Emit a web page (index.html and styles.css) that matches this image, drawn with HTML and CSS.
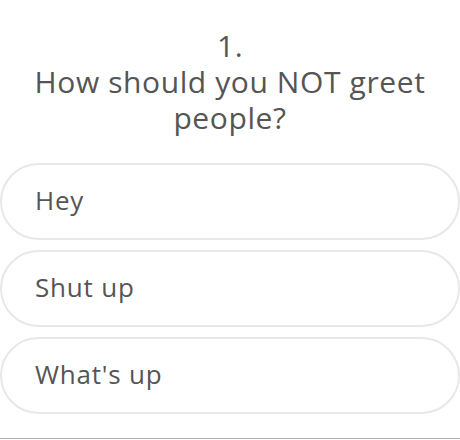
FILE: index.html
```html
<!DOCTYPE html>
<html>
<head>
<meta charset="utf-8">
<link rel="stylesheet" href="styles.css">
</head>
<body>
<div class="quiz">
  <div class="question">
    <div class="num">1.</div>
    <div class="text">How should you NOT greet people?</div>
  </div>
  <div class="answers">
    <div class="answer">Hey</div>
    <div class="answer">Shut up</div>
    <div class="answer">What's up</div>
  </div>
</div>
</body>
</html>
```

FILE: styles.css
```css
html, body {
  margin: 0;
  padding: 0;
  background: #fff;
}
body {
  font-family: "Open Sans", sans-serif;
  color: #555;
  width: 460px;
  height: 440px;
  overflow: hidden;
}
.quiz {
  height: 439px;
  border-bottom: 1px solid #b0b0b0;
  box-sizing: border-box;
}
.question {
  text-align: center;
  font-size: 30px;
  line-height: 36px;
  letter-spacing: 0.6px;
  padding: 28px 20px 0;
}
.answers {
  display: flex;
  flex-direction: column;
  gap: 10px;
  margin-top: 27px;
}
.answer {
  height: 77px;
  box-sizing: border-box;
  border: 2px solid #e8e8e8;
  border-radius: 39px;
  display: flex;
  align-items: center;
  padding: 0 0 3px 33px;
  font-size: 26px;
  letter-spacing: 0.8px;
}
```
